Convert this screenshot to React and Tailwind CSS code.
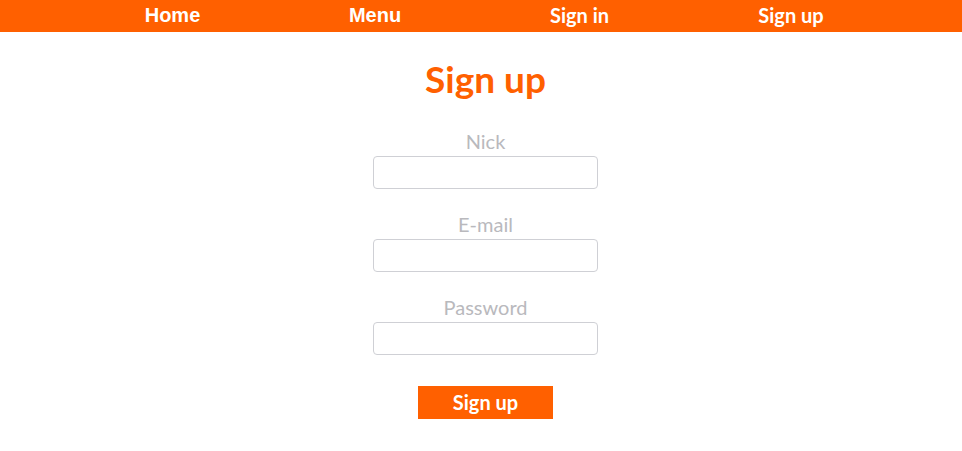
const NAV = [
  { label: 'Home', w: 'w-[205px]', font: "font-['Liberation_Sans',Arial,sans-serif]" },
  { label: 'Menu', w: 'w-[200px]', font: "font-['Liberation_Sans',Arial,sans-serif]" },
  { label: 'Sign in', w: 'w-[209px]', font: '' },
  { label: 'Sign up', w: 'w-[214px]', font: '' },
]

function Field({ label, type = 'text', top }) {
  return (
    <div className={`flex flex-col items-center ${top}`}>
      <label className="h-[24px] leading-[22px] text-[20px] text-[#b9b9bd]">{label}</label>
      <input
        type={type}
        className="mt-[2px] w-[225px] h-[33px] rounded-[4px] border border-[#cfd0d5] bg-white px-2 outline-none"
      />
    </div>
  )
}

export default function App() {
  return (
    <div className="min-h-[451px] bg-white font-['Lato','Liberation_Sans',sans-serif]">
      {/* Top navigation */}
      <nav className="h-[32px] bg-[#ff6000]">
        <ul className="ml-[70px] flex text-center">
          {NAV.map(item => (
            <li key={item.label} className={`${item.w} ${item.font} h-[32px] leading-[30px] text-[20px] font-bold text-white`}>
              <a href="#">{item.label}</a>
            </li>
          ))}
        </ul>
      </nav>

      {/* Form */}
      <div className="pl-[9px] flex flex-col items-center">
        <h1 className="mt-[27px] h-[40px] leading-[40px] text-[37px] font-bold text-[#ff6000]">Sign up</h1>
        <form className="flex flex-col items-center">
          <Field label="Nick" top="mt-[31px]" />
          <Field label="E-mail" type="email" top="mt-[24px]" />
          <Field label="Password" type="password" top="mt-[24px]" />
          <button
            type="button"
            className="mt-[31px] w-[135px] h-[33px] bg-[#ff6000] text-white text-[20px] font-bold leading-[33px]"
          >
            Sign up
          </button>
        </form>
      </div>
    </div>
  )
}
